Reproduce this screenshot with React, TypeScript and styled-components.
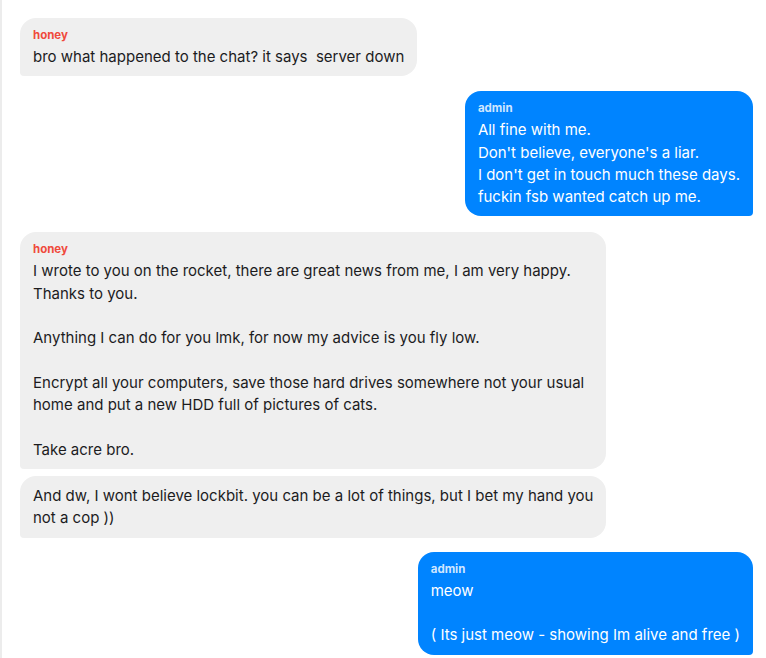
import React from "react";
import styled, { createGlobalStyle } from "styled-components";

const GlobalStyle = createGlobalStyle`
  html, body {
    margin: 0;
    padding: 0;
    background: #fff;
  }
  body {
    font-family: Inter, "Noto Sans", "Liberation Sans", sans-serif;
    -webkit-font-smoothing: antialiased;
  }
`;

type Side = "in" | "out";

interface Message {
  id: number;
  side: Side;
  author?: string;
  text: string;
  gap: number;
  wide?: boolean;
}

const messages: Message[] = [
  {
    id: 1,
    side: "in",
    author: "honey",
    text: "bro what happened to the chat? it says  server down",
    gap: 18,
  },
  {
    id: 2,
    side: "out",
    author: "admin",
    text:
      "All fine with me.\nDon't believe, everyone's a liar.\nI don't get in touch much these days.\nfuckin fsb wanted catch up me.",
    gap: 15,
  },
  {
    id: 3,
    side: "in",
    author: "honey",
    text:
      "I wrote to you on the rocket, there are great news from me, I am very happy.\nThanks to you.\n\nAnything I can do for you lmk, for now my advice is you fly low.\n\nEncrypt all your computers, save those hard drives somewhere not your usual\nhome and put a new HDD full of pictures of cats.\n\nTake acre bro.",
    gap: 16,
    wide: true,
  },
  {
    id: 4,
    side: "in",
    text:
      "And dw, I wont believe lockbit. you can be a lot of things, but I bet my hand you\nnot a cop ))",
    gap: 7,
    wide: true,
  },
  {
    id: 5,
    side: "out",
    author: "admin",
    text: "meow\n\n( Its just meow - showing Im alive and free )",
    gap: 14,
  },
];

const StyledChat = styled.div`
  min-height: 658px;
  box-sizing: border-box;
  border-left: 2px solid #ececec;
  padding: 0 13px 0 18px;
  display: flex;
  flex-direction: column;
`;

const StyledRow = styled.div<{ $side: Side; $gap: number }>`
  display: flex;
  justify-content: ${(p) => (p.$side === "out" ? "flex-end" : "flex-start")};
  margin-top: ${(p) => p.$gap}px;
`;

const StyledBubble = styled.div<{ $side: Side; $wide?: boolean }>`
  max-width: 80%;
  width: ${(p) => (p.$wide ? "80%" : "auto")};
  box-sizing: border-box;
  padding: 9px 13px 8px;
  background: ${(p) => (p.$side === "out" ? "#0084ff" : "#efefef")};
  color: ${(p) => (p.$side === "out" ? "#ffffff" : "#1c1c1e")};
  border-radius: ${(p) =>
    p.$side === "out" ? "16px 16px 4px 16px" : "16px 16px 16px 4px"};
`;

const StyledAuthor = styled.div<{ $side: Side }>`
  font-size: 11.5px;
  font-weight: 700;
  line-height: 17px;
  margin-bottom: 2px;
  color: ${(p) => (p.$side === "out" ? "rgba(255,255,255,0.82)" : "#ef4a3c")};
`;

const StyledText = styled.div`
  font-size: 15px;
  line-height: 22.3px;
  white-space: pre;
`;

export default function App() {
  return (
    <>
      <GlobalStyle />
      <StyledChat>
        {messages.map((m) => (
          <StyledRow key={m.id} $side={m.side} $gap={m.gap}>
            <StyledBubble $side={m.side} $wide={m.wide}>
              {m.author && <StyledAuthor $side={m.side}>{m.author}</StyledAuthor>}
              <StyledText>{m.text}</StyledText>
            </StyledBubble>
          </StyledRow>
        ))}
      </StyledChat>
    </>
  );
}
